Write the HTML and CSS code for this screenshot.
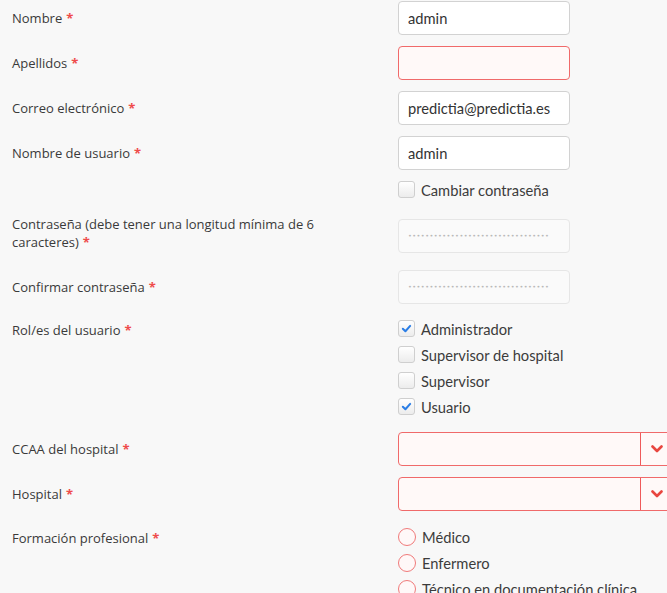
FILE: index.html
```html
<!DOCTYPE html>
<html lang="es">
<head>
<meta charset="utf-8">
<title>Editar usuario</title>
<link rel="stylesheet" href="styles.css">
</head>
<body>
<form class="user-form">
  <div class="row r-nombre">
    <label class="lbl">Nombre<span class="req">*</span></label>
    <div class="ctrl"><input class="field" type="text" value="admin"></div>
  </div>
  <div class="row">
    <label class="lbl">Apellidos<span class="req">*</span></label>
    <div class="ctrl"><input class="field invalid" type="text" value=""></div>
  </div>
  <div class="row">
    <label class="lbl">Correo electrónico<span class="req">*</span></label>
    <div class="ctrl"><input class="field" type="text" value="predictia@predictia.es"></div>
  </div>
  <div class="row r-user">
    <label class="lbl">Nombre de usuario<span class="req">*</span></label>
    <div class="ctrl"><input class="field" type="text" value="admin"></div>
  </div>
  <div class="row r-change">
    <div class="lbl"></div>
    <div class="ctrl">
      <div class="opt"><span class="box"></span><span>Cambiar contraseña</span></div>
    </div>
  </div>
  <div class="row r-pass">
    <label class="lbl lbl-two">Contraseña (debe tener una longitud mínima de 6 <span class="nw">caracteres)<span class="req">*</span></span></label>
    <div class="ctrl"><div class="field disabled"><span class="dots">•••••••••••••••••••••••••••••••••</span></div></div>
  </div>
  <div class="row r-confirm">
    <label class="lbl">Confirmar contraseña<span class="req">*</span></label>
    <div class="ctrl"><div class="field disabled"><span class="dots">•••••••••••••••••••••••••••••••••</span></div></div>
  </div>
  <div class="row r-roles">
    <label class="lbl lbl-top">Rol/es del usuario<span class="req">*</span></label>
    <div class="ctrl opts">
      <div class="opt"><span class="box checked"><svg viewBox="0 0 12 12" width="11" height="11"><path d="M2 6.3 L4.8 9 L10 3.2" fill="none" stroke="#2b7ee6" stroke-width="2.2" stroke-linecap="round" stroke-linejoin="round"/></svg></span><span>Administrador</span></div>
      <div class="opt"><span class="box"></span><span>Supervisor de hospital</span></div>
      <div class="opt"><span class="box"></span><span>Supervisor</span></div>
      <div class="opt"><span class="box checked"><svg viewBox="0 0 12 12" width="11" height="11"><path d="M2 6.3 L4.8 9 L10 3.2" fill="none" stroke="#2b7ee6" stroke-width="2.2" stroke-linecap="round" stroke-linejoin="round"/></svg></span><span>Usuario</span></div>
    </div>
  </div>
  <div class="row r-ccaa">
    <label class="lbl">CCAA del hospital<span class="req">*</span></label>
    <div class="ctrl">
      <div class="select invalid"><span class="sel-val"></span><span class="sel-btn"><svg viewBox="0 0 12 8" width="12" height="8"><path d="M1.5 1.5 L6 6 L10.5 1.5" fill="none" stroke="#e8463f" stroke-width="2.6" stroke-linecap="round" stroke-linejoin="round"/></svg></span></div>
    </div>
  </div>
  <div class="row r-hosp">
    <label class="lbl">Hospital<span class="req">*</span></label>
    <div class="ctrl">
      <div class="select invalid"><span class="sel-val"></span><span class="sel-btn"><svg viewBox="0 0 12 8" width="12" height="8"><path d="M1.5 1.5 L6 6 L10.5 1.5" fill="none" stroke="#e8463f" stroke-width="2.6" stroke-linecap="round" stroke-linejoin="round"/></svg></span></div>
    </div>
  </div>
  <div class="row r-form">
    <label class="lbl lbl-top">Formación profesional<span class="req">*</span></label>
    <div class="ctrl opts">
      <div class="opt"><span class="radio"></span><span>Médico</span></div>
      <div class="opt"><span class="radio"></span><span>Enfermero</span></div>
      <div class="opt"><span class="radio"></span><span>Técnico en documentación clínica</span></div>
    </div>
  </div>
</form>
</body>
</html>
```

FILE: styles.css
```css
html, body {
  margin: 0;
  padding: 0;
  background: #f8f8f8;
  overflow: hidden;
}

.user-form {
  display: flex;
  flex-direction: column;
  padding-top: 1px;
  width: 700px;
}

.row {
  display: flex;
  align-items: center;
  margin-bottom: 11px;
}

.lbl {
  width: 386px;
  flex: none;
  box-sizing: border-box;
  padding-left: 12px;
  padding-right: 60px;
  font-family: "Open Sans", sans-serif;
  font-size: 13px;
  line-height: 18px;
  color: #3a3a3a;
}

.lbl-two {
  align-self: flex-start;
  margin-top: -4px;
}

.lbl-top {
  align-self: flex-start;
  margin-top: 1px;
}

.nw {
  white-space: nowrap;
}

.req {
  color: #ef4b4b;
  font-weight: 700;
  margin-left: 4px;
}

.ctrl {
  flex: none;
  padding-left: 12px;
}

.field {
  display: block;
  box-sizing: border-box;
  width: 172px;
  height: 34px;
  margin: 0;
  padding: 0 9px;
  border: 1px solid #d2d2d2;
  border-radius: 4px;
  background: #fff;
  font-family: Lato, sans-serif;
  font-size: 14.7px;
  color: #333;
  outline: none;
}

.field.invalid {
  border-color: #f06a6a;
  background: #fff9f8;
}

.field.disabled {
  display: flex;
  align-items: center;
  background: #fafafa;
  border-color: #e6e6e6;
}

.dots {
  font-family: "DejaVu Sans", sans-serif;
  font-size: 6.5px;
  letter-spacing: 0.45px;
  color: #b9b9b9;
  white-space: nowrap;
}

.r-user { margin-bottom: 11px; }
.r-change { margin-bottom: 21px; }
.r-pass { margin-bottom: 17px; }
.r-confirm { margin-bottom: 16px; }
.r-roles { margin-bottom: 17px; }
.r-ccaa { margin-bottom: 11px; }
.r-hosp { margin-bottom: 17px; }

.opts {
  display: flex;
  flex-direction: column;
  gap: 9px;
}

.opt {
  display: flex;
  align-items: center;
  gap: 6px;
  height: 17px;
  font-family: Lato, sans-serif;
  font-size: 14.7px;
  color: #3c3c3c;
  white-space: nowrap;
}

.box {
  box-sizing: border-box;
  width: 17px;
  height: 17px;
  flex: none;
  border: 1px solid #cfcfcf;
  border-radius: 3px;
  background: linear-gradient(#ffffff, #ececec);
  display: flex;
  align-items: center;
  justify-content: center;
}

.radio {
  box-sizing: border-box;
  width: 18px;
  height: 18px;
  flex: none;
  border: 1px solid #f07a7a;
  border-radius: 50%;
  background: #fff8f8;
}

.select {
  box-sizing: border-box;
  width: 300px;
  height: 34px;
  display: flex;
  border: 1px solid #d2d2d2;
  border-radius: 4px;
  background: #fff;
}

.select.invalid {
  border-color: #f06a6a;
  background: #fff9f8;
}

.sel-val {
  width: 241px;
  flex: none;
}

.sel-btn {
  width: 34px;
  flex: none;
  border-left: 1px solid #ef5a5a;
  display: flex;
  align-items: center;
  padding-left: 10px;
  box-sizing: border-box;
}
```
